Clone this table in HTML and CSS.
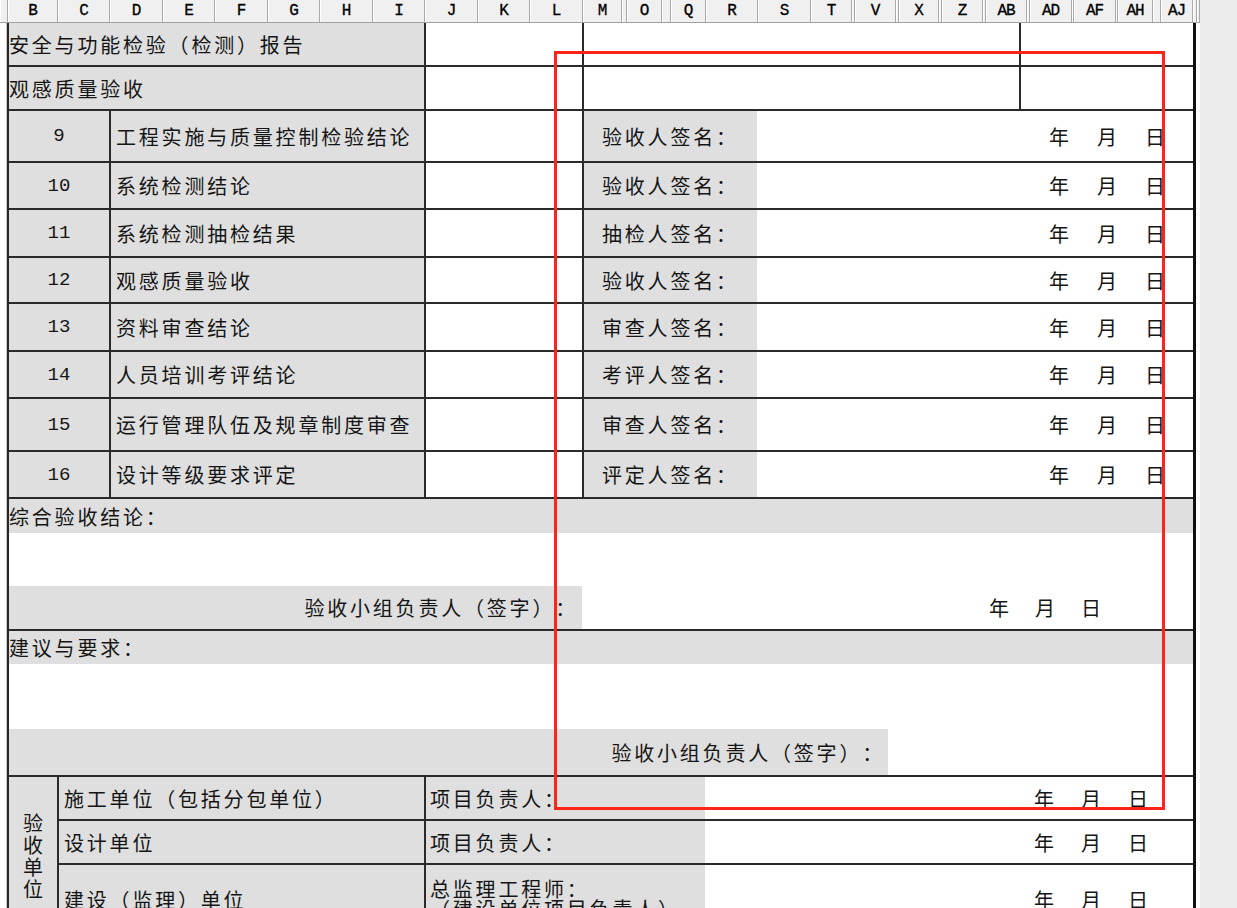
FILE: index.html
```html
<!DOCTYPE html>
<html lang="zh-CN">
<head>
<meta charset="utf-8">
<title>验收报告</title>
<link rel="stylesheet" href="styles.css">
</head>
<body>
<div class="app">
  <div class="main">
    <div class="colhead">
      <div class="ch"></div>
      <div class="ch">B</div><div class="ch">C</div><div class="ch">D</div><div class="ch">E</div>
      <div class="ch">F</div><div class="ch">G</div><div class="ch">H</div><div class="ch">I</div>
      <div class="ch">J</div><div class="ch">K</div><div class="ch">L</div><div class="ch">M</div>
      <div class="ch"></div><div class="ch">O</div><div class="ch"></div><div class="ch">Q</div>
      <div class="ch">R</div><div class="ch">S</div><div class="ch">T</div><div class="ch"></div>
      <div class="ch">V</div><div class="ch"></div><div class="ch">X</div><div class="ch"></div>
      <div class="ch">Z</div><div class="ch"></div><div class="ch">AB</div><div class="ch"></div>
      <div class="ch">AD</div><div class="ch"></div><div class="ch">AF</div><div class="ch"></div>
      <div class="ch">AH</div><div class="ch"></div><div class="ch">AJ</div><div class="ch"></div>
      <div class="ch"></div>
    </div>
    <div class="body">
      <div class="gutter"></div>
      <div class="sheet">
        <div class="row ra">
          <div class="c g br txt pl0">安全与功能检验（检测）报告</div>
          <div class="c br"></div>
          <div class="c br"></div>
          <div class="c"></div>
        </div>
        <div class="row ra">
          <div class="c g br txt pl0">观感质量验收</div>
          <div class="c br"></div>
          <div class="c br"></div>
          <div class="c"></div>
        </div>

        <div class="row rb h52">
          <div class="c g br num">9</div>
          <div class="c g br txt pl5">工程实施与质量控制检验结论</div>
          <div class="c br"></div>
          <div class="c g txt sig">验收人签名：</div>
          <div class="c date d1"><span>年</span><span>月</span><span>日</span></div>
        </div>
        <div class="row rb h47">
          <div class="c g br num">10</div>
          <div class="c g br txt pl5">系统检测结论</div>
          <div class="c br"></div>
          <div class="c g txt sig">验收人签名：</div>
          <div class="c date d1"><span>年</span><span>月</span><span>日</span></div>
        </div>
        <div class="row rb h48">
          <div class="c g br num">11</div>
          <div class="c g br txt pl5">系统检测抽检结果</div>
          <div class="c br"></div>
          <div class="c g txt sig">抽检人签名：</div>
          <div class="c date d1"><span>年</span><span>月</span><span>日</span></div>
        </div>
        <div class="row rb h46">
          <div class="c g br num">12</div>
          <div class="c g br txt pl5">观感质量验收</div>
          <div class="c br"></div>
          <div class="c g txt sig">验收人签名：</div>
          <div class="c date d1"><span>年</span><span>月</span><span>日</span></div>
        </div>
        <div class="row rb h48">
          <div class="c g br num">13</div>
          <div class="c g br txt pl5">资料审查结论</div>
          <div class="c br"></div>
          <div class="c g txt sig">审查人签名：</div>
          <div class="c date d1"><span>年</span><span>月</span><span>日</span></div>
        </div>
        <div class="row rb h47">
          <div class="c g br num">14</div>
          <div class="c g br txt pl5">人员培训考评结论</div>
          <div class="c br"></div>
          <div class="c g txt sig">考评人签名：</div>
          <div class="c date d1"><span>年</span><span>月</span><span>日</span></div>
        </div>
        <div class="row rb h53">
          <div class="c g br num">15</div>
          <div class="c g br txt pl5">运行管理队伍及规章制度审查</div>
          <div class="c br"></div>
          <div class="c g txt sig">审查人签名：</div>
          <div class="c date d1"><span>年</span><span>月</span><span>日</span></div>
        </div>
        <div class="row rb h47">
          <div class="c g br num">16</div>
          <div class="c g br txt pl5">设计等级要求评定</div>
          <div class="c br"></div>
          <div class="c g txt sig">评定人签名：</div>
          <div class="c date d1"><span>年</span><span>月</span><span>日</span></div>
        </div>

        <div class="band g txt b34">综合验收结论：</div>
        <div class="blank b53"></div>
        <div class="row rc">
          <div class="c g txt right pr6">验收小组负责人（签字）：</div>
          <div class="c date d2"><span>年</span><span>月</span><span>日</span></div>
        </div>

        <div class="band g txt b33">建议与要求：</div>
        <div class="blank b65"></div>
        <div class="row rd">
          <div class="c g txt right pr5">验收小组负责人（签字）：</div>
          <div class="c"></div>
        </div>

        <div class="units">
          <div class="unitlabel g">
            <span>验</span><span>收</span><span>单</span><span>位</span>
          </div>
          <div class="unitrows">
            <div class="row re h44">
              <div class="c g br txt pl5">施工单位（包括分包单位）</div>
              <div class="c g txt pl4">项目负责人：</div>
              <div class="c date d3"><span>年</span><span>月</span><span>日</span></div>
            </div>
            <div class="row re h44">
              <div class="c g br txt pl5">设计单位</div>
              <div class="c g txt pl4">项目负责人：</div>
              <div class="c date d3"><span>年</span><span>月</span><span>日</span></div>
            </div>
            <div class="row re h70">
              <div class="c g br txt pl5">建设（监理）单位</div>
              <div class="c g txt pl4 two">
                <div>总监理工程师：</div>
                <div>（建设单位项目负责人）</div>
              </div>
              <div class="c date d3"><span>年</span><span>月</span><span>日</span></div>
            </div>
          </div>
        </div>
      </div>
      <div class="pad"></div>
    </div>
  </div>
  <div class="side"></div>
</div>
<div class="mark"></div>
</body>
</html>
```

FILE: styles.css
```css
* {
  box-sizing: border-box;
  margin: 0;
  padding: 0;
}

html, body {
  width: 1237px;
  height: 908px;
  overflow: hidden;
  background: #ffffff;
}

body {
  position: relative;
  font-family: "Noto Sans CJK SC", "Noto Sans", sans-serif;
  font-size: 20px;
  color: #151515;
  text-spacing-trim: space-all;
}

.app {
  display: flex;
  height: 908px;
}

.main {
  width: 1200px;
  flex: none;
  display: flex;
  flex-direction: column;
}

.side {
  flex: 1;
  background: #ececec;
}

/* column header strip */
.colhead {
  display: grid;
  grid-template-columns:
    8px 50px 52px 53px 52px 53px 52px 53px 52px 53px 52px 53px
    39px 5px 35px 9px 35px 52px 53px 41px 3px 41px 3px 40px 3px
    41px 3px 41px 3px 42px 2px 42px 2px 35px 8px 32px 4px 3px;
  height: 23px;
  flex: none;
  background: #f0f0f0;
  border-bottom: 1px solid #a2a2a2;
}

.ch {
  border-right: 1px solid #a9a9a9;
  box-shadow: inset 1px 0 #ffffff;
  font-family: "Liberation Mono", monospace;
  font-size: 16px;
  line-height: 22px;
  text-align: center;
  color: #000000;
  overflow: hidden;
  white-space: nowrap;
  letter-spacing: -1px;
  -webkit-text-stroke: 0.3px #000000;
}

.body {
  display: flex;
  flex: 1;
  min-height: 0;
}

.gutter {
  width: 7px;
  flex: none;
  border-right: 1px solid #c6c6c6;
}

.sheet {
  width: 1189px;
  flex: none;
  border-left: 2px solid #262626;
  border-right: 3px solid #111111;
}

.pad {
  flex: 1;
}

/* rows */
.row {
  display: grid;
  border-bottom: 2px solid #2a2a2a;
}

.ra {
  height: 44px;
  grid-template-columns: 417px 158px 437px 1fr;
}

.rb {
  grid-template-columns: 102px 315px 158px 173px 1fr;
}

.rc {
  height: 45px;
  grid-template-columns: 573px 1fr;
}

.rd {
  height: 48px;
  grid-template-columns: 879px 1fr;
}

.re {
  grid-template-columns: 367px 279px 1fr;
}

.h44 { height: 44px; }
.h46 { height: 46px; }
.h47 { height: 47px; }
.h48 { height: 48px; }
.h52 { height: 52px; }
.h53 { height: 53px; }
.h70 { height: 70px; }

.c {
  display: flex;
  align-items: center;
  white-space: nowrap;
  overflow: hidden;
}

.g {
  background: #dfdfdf;
}

.br {
  border-right: 2px solid #2a2a2a;
}

.txt {
  letter-spacing: 2.8px;
}

.pl0 { padding-left: 0; }
.pl4 { padding-left: 4px; }
.pl5 { padding-left: 5px; }

.right {
  justify-content: flex-end;
}

.pr5 { padding-right: 3px; }
.pr6 { padding-right: 4px; }

.num {
  justify-content: center;
  font-family: "Liberation Mono", monospace;
  font-size: 19px;
  letter-spacing: 0;
}

.sig {
  padding-left: 18px;
}

.date {
  justify-content: flex-end;
  gap: 27px;
}

.date span {
  width: 20px;
  text-align: center;
}

.d1 { padding-right: 28px; gap: 28px; }
.d2 { padding-right: 92px; gap: 26px; }
.d3 { padding-right: 45px; gap: 27px; }

/* full-width bands */
.band {
  display: flex;
  align-items: center;
  white-space: nowrap;
}

.b33 { height: 33px; }
.b34 { height: 34px; }
.b53 { height: 53px; }
.b65 { height: 65px; }

/* acceptance units block */
.units {
  display: flex;
  height: 158px;
}

.unitlabel {
  width: 50px;
  flex: none;
  border-right: 2px solid #2a2a2a;
  display: flex;
  flex-direction: column;
  justify-content: center;
  align-items: center;
  line-height: 22px;
}

.unitrows {
  flex: 1;
  display: flex;
  flex-direction: column;
}

.two {
  flex-direction: column;
  align-items: flex-start;
  justify-content: center;
  line-height: 20px;
}

/* red annotation frame */
.mark {
  position: absolute;
  left: 554px;
  top: 51px;
  width: 611px;
  height: 759px;
  border: 3px solid #ff2418;
  pointer-events: none;
}
```
